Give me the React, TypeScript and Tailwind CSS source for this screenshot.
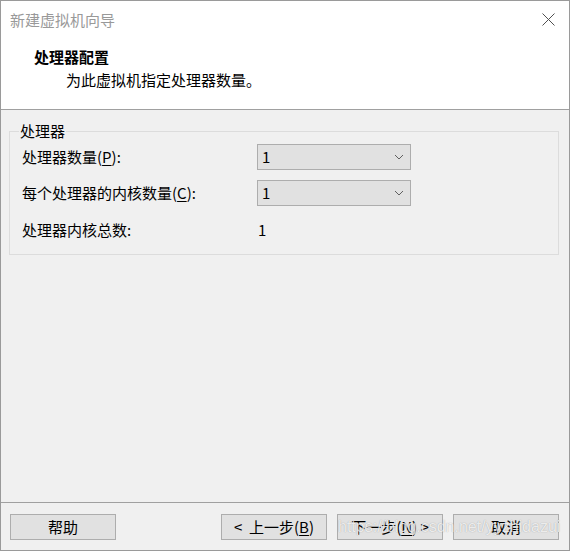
import { ReactNode } from "react";

const cjk = "font-['Microsoft_YaHei_UI','Noto_Sans_CJK_SC','Noto_Sans',sans-serif]";

function Select({ value }: { value: string }) {
  return (
    <div className="w-[154px] h-[26px] border border-[#adadad] bg-[#e1e1e1] flex items-center justify-between pl-[4px] pr-[6px]">
      <span className="leading-[20px]">{value}</span>
      <svg width="10" height="6" viewBox="0 0 10 6" className="text-[#606060]">
        <path d="M1 1 L5 5 L9 1" fill="none" stroke="currentColor" strokeWidth="1" />
      </svg>
    </div>
  );
}

function Btn({ children, className = "" }: { children: ReactNode; className?: string }) {
  return (
    <button className={`w-[106px] h-[26px] border border-[#adadad] bg-[#e1e1e1] flex items-center justify-center leading-[20px] text-black whitespace-pre ${className}`}>
      {children}
    </button>
  );
}

export default function App() {
  return (
    <div className={`relative w-[570px] h-[551px] border border-[#9a9a9a] bg-[#f0f0f0] flex flex-col text-[15px] text-black ${cjk}`}>
      {/* Header */}
      <div className="h-[109px] bg-white border-b border-[#a0a0a0] flex flex-col">
        <div className="h-[37px] flex items-center justify-between pl-[9px] pr-[14px]">
          <span className="text-[#999999] leading-[20px]">新建虚拟机向导</span>
          <svg width="13" height="13" viewBox="0 0 13 13" className="text-[#505050]">
            <path d="M0.5 0.5 L12.5 12.5 M12.5 0.5 L0.5 12.5" fill="none" stroke="currentColor" strokeWidth="1" />
          </svg>
        </div>
        <div className="mt-[9px] pl-[33px] font-bold leading-[20px]">处理器配置</div>
        <div className="mt-[3px] pl-[65px] leading-[20px]">为此虚拟机指定处理器数量。</div>
      </div>

      {/* Body */}
      <div className="flex-1 pt-[11px] pl-[8px] pr-[10px]">
        <fieldset className="border border-[#dcdcdc] px-0 pb-[12px]">
          <legend className="ml-[9px] px-[1px] leading-[20px]">处理器</legend>
          <div className="mt-[3px] pl-[12px] grid grid-cols-[235px_154px] auto-rows-[26px] gap-y-[10px] items-center">
            <span className="leading-[20px]">
              处理器数量(<span className="underline underline-offset-2">P</span>):
            </span>
            <Select value="1" />
            <span className="leading-[20px]">
              每个处理器的内核数量(<span className="underline underline-offset-2">C</span>):
            </span>
            <Select value="1" />
            <span className="leading-[20px] translate-y-[1px]">处理器内核总数:</span>
            <span className="leading-[20px] pl-[1px] translate-y-[1px]">1</span>
          </div>
        </fieldset>
      </div>

      {/* Footer */}
      <div className="h-[48px] border-t border-[#a0a0a0] pt-[11px] pl-[9px] pr-[10px] flex items-start">
        <Btn>帮助</Btn>
        <div className="flex-1" />
        <Btn>
          {"<  上一步("}<span className="underline underline-offset-2">B</span>)
        </Btn>
        <Btn className="ml-[10px]">
          下一步(<span className="underline underline-offset-2">N</span>{") >"}
        </Btn>
        <Btn className="ml-[10px]">取消</Btn>
      </div>

      {/* watermark */}
      <div className="absolute left-[337px] top-[516px] font-['Liberation_Sans',sans-serif] text-[16px] leading-[20px] text-white/80 [text-shadow:0_0_1px_rgba(0,0,0,0.35)] pointer-events-none">
        https://blog.csdn.net/yyzhidazui
      </div>
    </div>
  );
}
